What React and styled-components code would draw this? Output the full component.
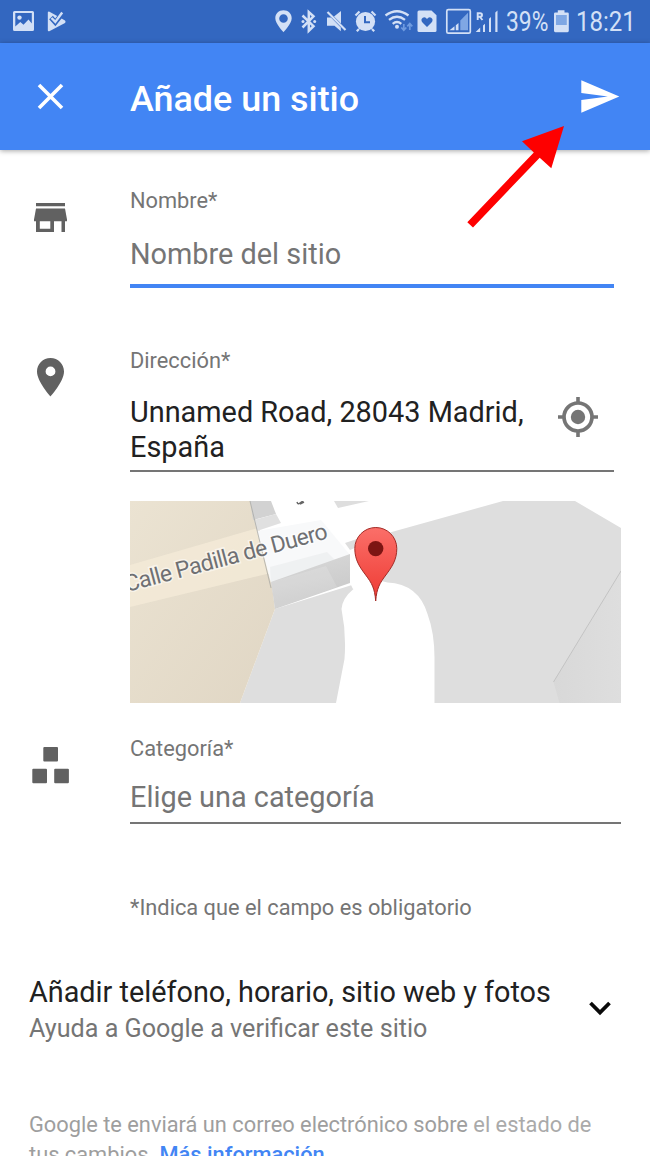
import React from "react";
import styled, { createGlobalStyle } from "styled-components";

const GlobalStyle = createGlobalStyle`
  * { box-sizing: border-box; }
  html, body { margin: 0; padding: 0; background: #fff; }
  body { overflow: hidden; font-family: Roboto, "Noto Sans", sans-serif; }
`;

const Screen = styled.div`
  position: relative;
  width: 650px;
  height: 1156px;
  overflow: hidden;
  background: #fff;
`;

const StatusBar = styled.div`
  display: flex;
  height: 43px;
  background: #3367c0;
  color: #d3e0f6;
`;

const StatusIcon = styled.svg`
  display: block;
  flex: none;
  height: 43px;
`;

const StatusSpacer = styled.div`
  flex: 1;
`;

const StatusText = styled.div`
  flex: none;
  width: ${(p) => p.$width}px;
  font-size: 27px;
  line-height: 45px;
  white-space: nowrap;
`;

const Condensed = styled.span`
  display: inline-block;
  transform: scaleX(${(p) => p.$scale});
  transform-origin: 0 50%;
`;

const AppBar = styled.header`
  display: flex;
  align-items: center;
  height: 107px;
  padding: 0 30px 0 36px;
  background: #4285f4;
  box-shadow: 0 1px 5px rgba(0, 0, 0, 0.35);
`;

const Title = styled.h1`
  flex: 1;
  margin: 5px 0 0 65px;
  color: #fff;
  font-size: 35.9px;
  font-weight: 500;
  line-height: 44px;
`;

const BarIcon = styled.svg`
  display: block;
  flex: none;
`;

const Row = styled.section`
  display: flex;
  height: ${(p) => p.$height}px;
`;

const IconColumn = styled.div`
  flex: none;
  width: 130px;
  padding: ${(p) => p.$top}px 0 0 31px;
  color: #616161;

  svg { display: block; }
`;

const Field = styled.div`
  width: ${(p) => p.$width}px;
  padding-top: ${(p) => p.$top}px;
`;

const Label = styled.div`
  color: #757575;
  font-size: 21.8px;
  line-height: 26px;
  white-space: nowrap;
`;

const InputLine = styled.div`
  display: flex;
  height: ${(p) => p.$height}px;
  padding-top: ${(p) => p.$top}px;
  border-bottom: ${(p) => (p.$active ? "4px solid #4285f4" : "2px solid #757575")};
`;

const Value = styled.div`
  flex: 1;
  color: ${(p) => (p.$filled ? "#212121" : "#757575")};
  font-size: 28.87px;
  line-height: ${(p) => (p.$filled ? 35 : 34)}px;
  white-space: nowrap;
`;

const TargetIcon = styled.svg`
  display: block;
  flex: none;
  margin: 2px 16px 0 0;
`;

const MapPreview = styled.svg`
  display: block;
  width: 491px;
  height: 202px;
  margin-left: 130px;
`;

const Note = styled.div`
  padding: 71px 0 0 130px;
`;

const Expander = styled.section`
  display: flex;
  justify-content: space-between;
  padding: 54px 38px 0 29px;
`;

const ExpanderTitle = styled.div`
  color: #212121;
  font-size: 28.8px;
  line-height: 34px;
  white-space: nowrap;
`;

const ExpanderHint = styled.div`
  margin-top: 5px;
  color: #757575;
  font-size: 25.15px;
  line-height: 30px;
  white-space: nowrap;
`;

const Chevron = styled.svg`
  display: block;
  margin-top: 26px;
`;

const Footer = styled.footer`
  padding: 66px 0 0 29px;
  color: #9e9e9e;
  font-size: 21.8px;
  line-height: 30px;
  white-space: nowrap;
`;

const More = styled.span`
  color: #4285f4;
  font-weight: 500;
`;

const Faded = styled.span`
  color: #aaa;
`;

const Pointer = styled.svg`
  position: absolute;
  left: 460px;
  top: 120px;
`;

function StatusLeft() {
  return (
    <StatusIcon width="70" viewBox="0 0 70 43">
      <path fill="currentColor" fillRule="evenodd" d="M14 11h18.500q1.500 0 1.500 1.500v17q0 1.500-1.500 1.500h-18q-1.500 0-1.500-1.500v-17q0-1.500 1.500-1.500zM15.300 13v13.500l5-4.500 3.200 2.800 5-5.200 3.300 3.800V13z" />
      <circle cx="19.500" cy="17.600" r="2.200" fill="currentColor" />
      <path fill="currentColor" d="M49 11.500l10 5.500 6 3.500q1.200 1.200 0 2.400l-15.700 8.300q-1.500.5-1.500-1V12.700q0-1.200 1.200-1.200z" />
      <path fill="none" stroke="#3367c0" strokeWidth="5" d="M51 17.500l4.300 4.800 8.500-10.500" />
      <path fill="none" stroke="currentColor" strokeWidth="2.400" d="M51.500 18l3.800 3.900 6.900-9.400" />
    </StatusIcon>
  );
}

function StatusRight() {
  return (
    <>
      <StatusIcon width="28" viewBox="270 0 28 43">
        <path fill="currentColor" fillRule="evenodd" d="M283.500 10.300c-4.800 0-8.200 3.500-8.200 8 0 5.500 8.200 14 8.200 14s8.200-8.500 8.200-14c0-4.500-3.400-8-8.200-8zm0 3.900a4.300 4.300 0 1 1 0 8.600 4.300 4.300 0 0 1 0-8.600z" />
      </StatusIcon>
      <StatusIcon width="26" viewBox="298 0 26 43">
        <path fill="none" stroke="currentColor" strokeWidth="2.500" d="M302.500 15.500l11 10.700-4.700 4.500V12l4.700 4.300-11 11.200" />
        <circle cx="303" cy="21.500" r="1.500" fill="currentColor" />
        <circle cx="314.700" cy="21.500" r="1.500" fill="currentColor" />
      </StatusIcon>
      <StatusIcon width="28" viewBox="324 0 28 43">
        <path fill="currentColor" d="M327 17.500h4l9.800 10v3.800l-6.300-5.500H327zM341 11v12.500l-7-7z" />
        <path stroke="currentColor" strokeWidth="2.200" d="M327.500 12l18 18" />
      </StatusIcon>
      <StatusIcon width="30" viewBox="352 0 30 43">
        <circle cx="365.500" cy="21.500" r="9.600" fill="currentColor" />
        <path fill="none" stroke="currentColor" strokeWidth="2.200" d="M355.500 15.500l4-4M375.500 15.500l-4-4M359 29l-2.200 2.300M372 29l2.200 2.300" />
        <path fill="none" stroke="#3367c0" strokeWidth="2" d="M365 16v6.300h5" />
      </StatusIcon>
      <StatusIcon width="33" viewBox="382 0 33 43">
        <path fill="none" stroke="currentColor" strokeWidth="2.300" d="M385.500 15.500q11.500-8.500 23 0M389 19.800q8-6 16 0M392.700 23.800q4.300-3.500 8.600 0" />
        <circle cx="397" cy="26.800" r="2" fill="currentColor" />
        <path fill="none" stroke="#6f9be0" strokeWidth="1.700" d="M403.800 24v6M401.300 27.500l2.500 2.700 2.500-2.700M409.800 30v-6M407.300 26.300l2.500-2.700 2.500 2.700" />
      </StatusIcon>
      <StatusIcon width="27" viewBox="415 0 27 43">
        <path fill="currentColor" d="M419 10.500h12.500l5 4.700v15.300q0 1.500-1.500 1.500h-16q-1.500 0-1.500-1.500V12q0-1.500 1.500-1.500z" />
        <path fill="#3367c0" d="M427 27l-4.500-4.500q-2.300-3 .3-4.800 2.500-1.200 4.200 1.300 1.700-2.500 4.200-1.300 2.600 1.800.3 4.800z" />
      </StatusIcon>
      <StatusIcon width="33" viewBox="442 0 33 43">
        <rect x="446.800" y="9.700" width="23.500" height="23.500" rx="1.500" fill="none" stroke="currentColor" strokeWidth="1.700" />
        <path fill="currentColor" d="M449.500 30.300l5-4v4zM455.800 25.200l2.700-2.200v7.300h-2.700z" />
        <path fill="#7fa7e4" d="M460.300 20.500l7.700-7.700v17.500h-7.700z" />
      </StatusIcon>
      <StatusIcon width="31" viewBox="475 0 31 43">
        <path fill="none" stroke="currentColor" strokeWidth="1.900" d="M477.700 20v-6.700h2.500q1.800 0 1.800 1.700t-1.800 1.700h-2.500M480 17l2.500 3" />
        <path fill="currentColor" d="M475.700 32l4.500-4.500V32zM483 25.500l2-1.700V32h-2zM489 18.700l2-1.700V32h-2zM495.300 12.400l2.200-1.900V32h-2.200z" />
      </StatusIcon>
      <StatusText $width={46}><Condensed $scale={0.845}>39%</Condensed></StatusText>
      <StatusIcon width="24" viewBox="552 0 24 43">
        <path fill="#7fa7e4" d="M555.500 14h12v11h-12z" />
        <path fill="currentColor" fillRule="evenodd" d="M557.800 10.200h6.700v2.300h3q1.300 0 1.300 1.300v17q0 1.400-1.300 1.400h-12.200q-1.300 0-1.300-1.400v-17q0-1.300 1.300-1.300h2.500zM556 15v10h10.800V15z" />
      </StatusIcon>
      <StatusText $width={74}><Condensed $scale={0.89}>18:21</Condensed></StatusText>
    </>
  );
}

function StoreIcon() {
  return (
    <svg width="40" height="32" viewBox="31 202 40 32">
      <path fill="currentColor" fillRule="evenodd" d="M36 203h29v3.300H36zM36 208.500h29l2 11v1.800h-2V232h-3.500v-10.700H54V232H36v-10.700h-2v-1.800zM39.800 221.300v7.400h10.500v-7.400z" />
    </svg>
  );
}

function PlaceIcon() {
  return (
    <svg width="40" height="40" viewBox="31 357 40 40">
      <path fill="currentColor" fillRule="evenodd" d="M50.500 358c-7.600 0-13.500 6-13.500 13.500C37 381.500 50.500 396.500 50.500 396.500S64 381.500 64 371.500C64 364 58.100 358 50.500 358zm0 8.500a4.900 4.900 0 1 1 0 9.800 4.900 4.900 0 0 1 0-9.800z" />
    </svg>
  );
}

function CategoryIcon() {
  return (
    <svg width="40" height="38" viewBox="31 746 40 38" fill="currentColor">
      <rect x="43.300" y="747" width="14.700" height="14.500" rx="1" />
      <rect x="32.300" y="768.800" width="14.700" height="14.500" rx="1" />
      <rect x="54.200" y="768.800" width="14.700" height="14.500" rx="1" />
    </svg>
  );
}

function LocationMap() {
  return (
    <MapPreview viewBox="130 501 491 202">
      <defs>
        <linearGradient id="sand" x1="0" y1="0" x2="1" y2="1">
          <stop offset="0" stopColor="#ebe3d2" />
          <stop offset="1" stopColor="#e0d6c4" />
        </linearGradient>
        <linearGradient id="wall" x1="0" y1="0" x2="0.3" y2="1">
          <stop offset="0" stopColor="#dadada" />
          <stop offset="1" stopColor="#c8c8c8" />
        </linearGradient>
        <linearGradient id="pin" x1="0" y1="0" x2="0" y2="1">
          <stop offset="0" stopColor="#fb6f69" />
          <stop offset="1" stopColor="#ee3a33" />
        </linearGradient>
        <linearGradient id="slope" x1="0" y1="0" x2="1" y2="0">
          <stop offset="0" stopColor="#d8d8d8" />
          <stop offset="1" stopColor="#dedede" />
        </linearGradient>
      </defs>
      <rect x="130" y="501" width="491" height="202" fill="#fff" />
      <path fill="#dedede" d="M240 703l35-94 77-24 1.500 4q-11 9-12 20 5 25 3 50l-8.500 44z" />
      <path fill="#dedede" d="M345 545l158-44h72l46 27v175H434.500v-45q0-25-7-44-9-30-40-31.500l-41-10z" />
      <path fill="#fff" d="M345 536l20-2 5 22 10 26-27 7-8-16z" />
      <path fill="#dedede" d="M345 543l12-4v8l-7 3zM334 501h35l-31 7z" />
      <path fill="url(#slope)" d="M621 571l-67.500 111 6 21H621z" />
      <path stroke="#c3c3c3" strokeWidth="1" d="M621 571l-67.500 111" />
      <path fill="url(#sand)" d="M130 501h120l18 54 7 54-35 94H130z" />
      <path fill="#f3ead7" d="M130 565l128-37 9 31 4 14-141 34z" opacity=".85" />
      <path fill="#d2d2d2" d="M250 501h21l5 13-23 6z" />
      <path fill="#e0e0e0" d="M254 520l22-6 5 9-24 8z" />
      <path fill="#f8f9fa" d="M257 531l64-11 29 35-79 28z" />
      <path fill="#eceeef" d="M270 567l57-15 9 9-65 22z" opacity=".75" />
      <path fill="url(#wall)" d="M271 582l79-28v29l-75 26z" />
      <path fill="#fff" opacity=".15" d="M271 582l55-16 11 21-62 22z" />
      <path fill="none" stroke="#aaa9a4" strokeWidth=".8" d="M250 501l21 87" />
      <path fill="none" stroke="#666" strokeWidth="1.500" d="M297 502q1 3 3 1l3-2M300 504l4-2" />
      <text x="0" y="0" transform="translate(127 592) rotate(-14.900)" fontFamily="Roboto, sans-serif" fontSize="22.900" fill="#6f7073" stroke="#fff" strokeOpacity=".5" strokeWidth="3" paintOrder="stroke" textLength="209">Calle Padilla de Duero</text>
      <path fill="url(#pin)" stroke="#a32a25" strokeWidth="1" d="M375.700 601c-1-13-4-18-10-26-6-8-10.900-15-10.900-26.500a21 21 0 0 1 42 0c0 11.500-5 18.500-10.900 26.500-6 8-9.200 13-10.200 26z" />
      <circle cx="375.700" cy="548.600" r="7.700" fill="#7c1513" />
    </MapPreview>
  );
}

export default function App() {
  return (
    <>
      <GlobalStyle />
      <Screen>
        <StatusBar>
          <StatusLeft />
          <StatusSpacer />
          <StatusRight />
        </StatusBar>
        <AppBar>
          <BarIcon width="29" height="29" viewBox="0 0 29 29">
            <path fill="none" stroke="#fff" strokeWidth="3.600" d="M3 3l23 23M26 3L3 26" />
          </BarIcon>
          <Title>Añade un sitio</Title>
          <BarIcon width="40" height="34" viewBox="580 80 40 34">
            <path fill="#fff" d="M581.300 80.300l38 16.200-38 16.200V100l26.500-3.500-26.500-3.500z" />
          </BarIcon>
        </AppBar>

        <Row $height={160}>
          <IconColumn $top={52}><StoreIcon /></IconColumn>
          <Field $top={37.500} $width={484}>
            <Label>Nombre*</Label>
            <InputLine $active $height={74.500} $top={23.500}>
              <Value>Nombre del sitio</Value>
            </InputLine>
          </Field>
        </Row>

        <Row $height={191}>
          <IconColumn $top={47}><PlaceIcon /></IconColumn>
          <Field $top={38} $width={484}>
            <Label>Dirección*</Label>
            <InputLine $height={98} $top={21}>
              <Value $filled>Unnamed Road, 28043 Madrid,<br />España</Value>
              <TargetIcon width="40" height="40" viewBox="0 0 40 40">
                <circle cx="20" cy="20" r="14" fill="none" stroke="#757575" strokeWidth="3.700" />
                <circle cx="20" cy="20" r="7.200" fill="#757575" />
                <path stroke="#757575" strokeWidth="3.600" d="M20 0v7M20 33v7M0 20h7M33 20h7" />
              </TargetIcon>
            </InputLine>
          </Field>
        </Row>

        <LocationMap />

        <Row $height={121}>
          <IconColumn $top={43}><CategoryIcon /></IconColumn>
          <Field $top={32.500} $width={491}>
            <Label>Categoría*</Label>
            <InputLine $height={62.500} $top={18.500}>
              <Value>Elige una categoría</Value>
            </InputLine>
          </Field>
        </Row>

        <Note><Label>*Indica que el campo es obligatorio</Label></Note>

        <Expander>
          <div>
            <ExpanderTitle>Añadir teléfono, horario, sitio web y fotos</ExpanderTitle>
            <ExpanderHint>Ayuda a Google a verificar este sitio</ExpanderHint>
          </div>
          <Chevron width="24" height="16" viewBox="0 0 24 16">
            <path fill="none" stroke="#0a0a0a" strokeWidth="3.800" d="M2.500 2l9.500 9.500 9.500-9.500" />
          </Chevron>
        </Expander>

        <Footer>
          Google te enviará un correo electrónico sobre <Faded>el estado de</Faded><br />
          tus cambios. <More>Más información</More>
        </Footer>

        <Pointer width="110" height="110" viewBox="460 120 110 110">
          <path fill="#fe0000" d="M564 126l-12.700 42.300-11.600-10.600L473 227.500l-5.700-5.300 66.500-69.700-11.800-11.300z" />
        </Pointer>
      </Screen>
    </>
  );
}
